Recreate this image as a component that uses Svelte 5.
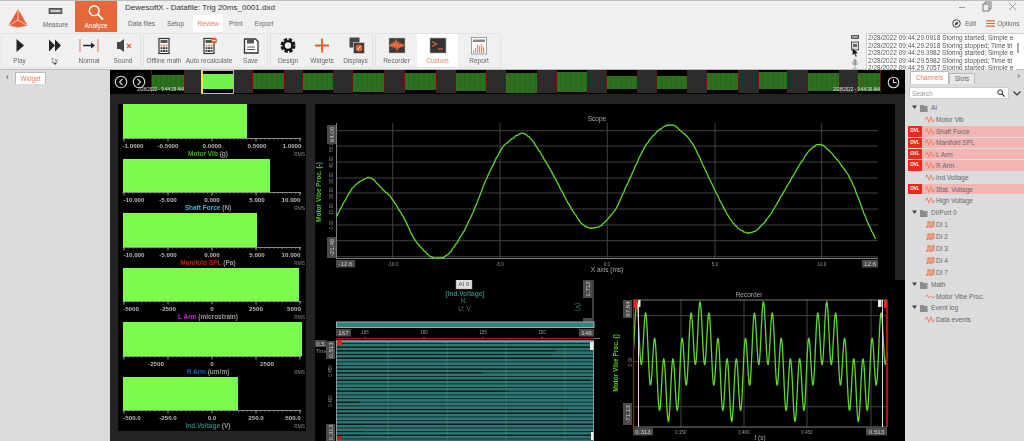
<script>
  const groups = [
    [['Play','play',35],['1x','ff',35],['Normal','normal',34],['Sound','sound',34]],
    [['Offline math','calc',40],['Auto recalculate','recalc',50],['Save','save',33]],
    [['Design','gear',34],['Widgets','plus',34],['Displays','displays',33]],
    [['Recorder','recorder',41],['Custom','custom',41],['Report','report',42]]
  ];
  const tabs = ['Data files','Setup','Review','Print','Export'];
  const log = [
    '2/28/2022 09:44:29.0918 Storing started; Simple e',
    '2/28/2022 09:44:29.2918 Storing stopped; Time tri',
    '2/28/2022 09:44:29.3982 Storing started; Simple e',
    '2/28/2022 09:44:29.5982 Storing stopped; Time tri',
    '2/28/2022 09:44:29.7057 Storing started; Simple e'
  ];
  const G = (w, t, h, stamp = '') => ({ kind: 'g', w, t, h, stamp });
  const D = (w) => ({ kind: 'd', w });
  const segs = [
    G(34,5,15,'2/28/2022 - 9:44:29 AM'),D(16),{kind:'s',w:33},D(18),G(33,3,16),D(17),G(32,3,17),D(18),G(33,3,19),D(19),G(33,3,17),
    D(18),G(32,3,18),D(18),G(33,3,20),D(18),G(32,2,20),D(18),G(32,6,13),D(18),G(32,6,13),D(18),G(33,3,17),D(19),G(30,2,17),D(19),G(33,3,18),D(17),G(24,3,18,'2/28/2022 - 9:44:30 AM')
  ];
  const meters = [
    { name:'Motor Vib', unit:'(g)', color:'#3fae1e', fill:124.5, labels:[['-1.0000',133],['-0.5000',168],['0.0000',212],['0.5000',257],['1.0000',292]] },
    { name:'Shaft Force', unit:'(N)', color:'#3ab6c8', fill:147, labels:[['-10.000',134],['-5.000',168],['0.000',212],['5.000',257],['10.000',291]] },
    { name:'Manifold SPL', unit:'(Pa)', color:'#b8241a', fill:134, labels:[['-10.000',134],['-5.000',168],['0.000',212],['5.000',257],['10.000',291]] },
    { name:'L Arm', unit:'(microstrain)', color:'#c42ad4', fill:176.5, labels:[['-5000',131],['-2500',168],['0',212],['2500',256],['5000',294]] },
    { name:'R Arm', unit:'(um/m)', color:'#2456c8', fill:179, labels:[['-2500',156],['0',212],['2500',267]] },
    { name:'Ind.Voltage', unit:'(V)', color:'#28807a', fill:115.5, labels:[['-500.0',132],['-250.0',168],['0.0',212],['250.0',256],['500.0',293]] }
  ];
  const minor = Array.from({ length: 41 }, (_, i) => 124 + i * 4.4);
  const major = [124, 168, 212, 256, 300];

  const tree = [
    { g:'AI' },{ n:'Motor Vib' },{ n:'Shaft Force', o:1 },{ n:'Manifold SPL', o:1 },{ n:'L Arm', o:1 },{ n:'R Arm', o:1 },
    { n:'Ind.Voltage' },{ n:'Stat. Voltage', o:1 },{ n:'High Voltage' },
    { g:'DI/Port 0' },{ n:'DI 1', d:1 },{ n:'DI 2', d:1 },{ n:'DI 3', d:1 },{ n:'DI 4', d:1 },{ n:'DI 7', d:1 },
    { g:'Math' },{ n:'Motor Vibe Proc.', m:1 },{ g:'Event log' },{ n:'Data events' }
  ];

  const a = [[65,348],[110,268],[140,242],[168,234],[200,265],[230,295],[270,360],[300,420],[345,468],[370,474],[400,462],[440,405],[475,335],[515,235],[555,155],[575,130],[620,100],[650,120],[680,165],[715,225],[760,310],[800,370],[830,384],[860,375],[900,330]]
    .map(([x, y]) => [315 + x / 3, 100 + y / 3]);
  const b = [[30,300],[60,235],[105,140],[150,88],[185,75],[215,95],[250,135],[300,240],[350,340],[380,380],[410,398],[440,390],[480,345],[530,260],[575,185],[600,150],[628,133],[655,150],[690,190],[725,245],[770,360],[800,422]]
    .map(([x, y]) => [610 + x / 3, 100 + y / 3]);
  const ctrl = [...a, ...b];
  function smooth(p) {
    const out = [];
    for (let i = 0; i < p.length - 1; i++) {
      const p0 = p[Math.max(0, i - 1)], p1 = p[i], p2 = p[i + 1], p3 = p[Math.min(p.length - 1, i + 2)];
      const n = Math.max(2, Math.round((p2[0] - p1[0]) / 1.5));
      for (let k = 0; k < n; k++) {
        const t = k / n, t2 = t * t, t3 = t2 * t;
        const f = (q) => 0.5 * (2 * p1[q] + (p2[q] - p0[q]) * t + (2 * p0[q] - 5 * p1[q] + 4 * p2[q] - p3[q]) * t2 + (3 * p1[q] - p0[q] - 3 * p2[q] + p3[q]) * t3);
        const x = f(0);
        const noise = 0.35 * Math.sin(x * 2.3) + 0.25 * Math.sin(x * 5.1 + 1);
        out.push(x.toFixed(1) + ',' + (f(1) + noise).toFixed(1));
      }
    }
    return out.join(' ');
  }
  const scopeLine = smooth(ctrl);

  const recPts = [];
  for (let zx = 101; zx <= 860; zx += 1.5) {
    const y = 230 - 90 * Math.cos(2 * Math.PI * (zx - 300) / 190) - 90 * Math.cos(2 * Math.PI * (zx - 300) / 27.14);
    recPts.push((600 + zx / 3).toFixed(1) + ',' + (285 + y / 3).toFixed(1));
  }
  const recLine = recPts.join(' ');

  const blackEnds = { 2: 556, 3: 552, 6: 340, 8: 481, 10: 590, 13: 508, 16: 360, 18: 568, 24: 363, 37: 412, 38: 458 };
  const rows = Array.from({ length: 27 }, (_, i) => ({ y: 343.5 + i * 3.67, end: blackEnds[i] ?? (i % 3 === 1 ? 594 : 336) }));
</script>

{#snippet icon(n)}
  <svg class="ti" viewBox="0 0 22 18" aria-hidden="true">
    {#if n === 'play'}
      <path d="M7.5 2v13l7.5-6.500z" fill="#222"/>
    {:else if n === 'ff'}
      <path d="M5 2.500v12l6-6zM11 2.500v12l6-6z" fill="#222"/>
    {:else if n === 'normal'}
      <path d="M2 2v13M20 2v13" stroke="#e58a78" stroke-width="1.200"/><path d="M5 8.500h9" stroke="#222" stroke-width="1.500"/><path d="M13 5.500l4 3-4 3z" fill="#222"/>
    {:else if n === 'sound'}
      <path d="M5 5h3l4-3v13l-4-3H5z" fill="#444"/><path d="M15 7l4 4M19 7l-4 4" stroke="#e0603a" stroke-width="1.100"/>
    {:else if n === 'calc' || n === 'recalc'}
      <rect x="6" y="1.500" width="10" height="15" fill="#fff" stroke="#333" stroke-width="1.200"/>
      <rect x="7.500" y="3" width="7" height="3" fill="#555"/>
      {#each [7.5, 10, 12.5] as x}{#each [7.5, 10.2, 13] as y}<rect {x} {y} width="2" height="2" fill={y === 7.5 ? '#e58a78' : '#444'}/>{/each}{/each}
      {#if n === 'recalc'}<circle cx="16" cy="3.500" r="3" fill="#e8603a"/><path d="M14.500 3.500h3" stroke="#fff"/>{/if}
    {:else if n === 'save'}
      <path d="M4.500 2h11l2.500 2.500V16h-13.500z" fill="#fff" stroke="#333" stroke-width="1.300"/><rect x="7" y="2.500" width="7" height="4" fill="#555"/><path d="M7 10h8M7 12.500h8" stroke="#555"/>
    {:else if n === 'gear'}
      <circle cx="11" cy="8.500" r="6.300" fill="none" stroke="#111" stroke-width="2.400" stroke-dasharray="3.300 1.650"/>
      <circle cx="11" cy="8.500" r="4.400" fill="none" stroke="#111" stroke-width="2.400"/>
    {:else if n === 'plus'}
      <path d="M11 1.500v14M4 8.500h14" stroke="#e85a24" stroke-width="1.800"/>
    {:else if n === 'displays'}
      <rect x="4.500" y="0.500" width="10" height="10" fill="#444"/><rect x="8.500" y="5.500" width="11" height="11" fill="#3c3c3c" stroke="#ddd" stroke-width="0.600"/><circle cx="14" cy="11" r="3.400" fill="#e8603a"/><path d="M12.500 12.500l3-3" stroke="#fff"/>
    {:else if n === 'recorder'}
      <rect x="3" y="1" width="16" height="15" fill="#3a3a3a" stroke="#bbb" stroke-width="0.500"/><path d="M3.500 8.500h1.500l1-2 1 3 1-5 1 7 1-9 1 11 1-9 1 7 1-5 1 3 1-2h2" stroke="#ea6a3a" stroke-width="1.200" fill="none"/><rect x="4" y="7" width="14" height="3" fill="#ea6a3a" opacity=".7"/>
    {:else if n === 'custom'}
      <rect x="3" y="1" width="16" height="15" fill="#333" stroke="#aaa" stroke-width="0.600"/><path d="M5 4.500l4.500 2.500L5 9.500" stroke="#e8603a" stroke-width="1.200" fill="none"/><path d="M11 12h5" stroke="#e8603a" stroke-width="1.200"/>
    {:else if n === 'report'}
      <rect x="3.500" y="0.500" width="15" height="16.500" fill="#fff" stroke="#888" stroke-width="0.800"/><rect x="5" y="2.500" width="12" height="2.500" fill="#888"/>
      {#each [[5,13],[7,11],[9,8],[11,9],[13,7],[15,10]] as [x, y]}<rect {x} {y} width="1.200" height={16 - y} fill="#ea8a68"/>{/each}
    {/if}
  </svg>
{/snippet}

<div class="app">
  <header class="ribbon">
    <div class="ribbon-top">
      <div class="logo">
        <svg viewBox="0 0 22 20" width="22" height="20" aria-hidden="true">
          <path d="M11 1l9.500 16.500-9.500 2-9.500-2z" fill="#e2603a"/>
          <path d="M11 1v11M11 12l9 5.500M11 12l-9 5.500" stroke="#f6d5c8" stroke-width="0.900" fill="none"/>
        </svg>
      </div>
      <div class="mode">
        <svg viewBox="0 0 16 7" width="15" height="6" aria-hidden="true"><rect width="16" height="7" fill="#555"/><rect x="2" y="2" width="12" height="3" fill="#ccc"/></svg>
        <span>Measure</span>
      </div>
      <div class="mode active">
        <svg viewBox="0 0 18 18" width="16" height="17" aria-hidden="true"><circle cx="7" cy="7" r="5.500" fill="none" stroke="#fff" stroke-width="1.600"/><path d="M11 11l6 6" stroke="#fff" stroke-width="2"/></svg>
        <span>Analyze</span>
      </div>
      <div class="title-col">
        <div class="title">DewesoftX - Datafile: Trig 20ms_0001.dxd</div>
        <nav class="tabs">
          {#each tabs as t}<span class="tab" class:on={t === 'Review'}>{t}</span>{/each}
        </nav>
      </div>
      <div class="win-col">
        <div class="win">
          <svg viewBox="0 0 60 12" width="60" height="12" aria-hidden="true">
            <path d="M0 6.500h6" stroke="#999"/>
            <rect x="24" y="3" width="6" height="7" fill="none" stroke="#777"/><path d="M26 3V1h6v7h-2" fill="none" stroke="#777"/>
            <path d="M50 2l7 7M57 2l-7 7" stroke="#999"/>
          </svg>
        </div>
        <div class="edit">
          <svg viewBox="0 0 10 10" width="9" height="9" aria-hidden="true"><circle cx="5" cy="5" r="4.200" fill="none" stroke="#333"/><path d="M3 7l1-3 3-1-1 3z" fill="#333"/></svg>
          <span>Edit</span>
          <svg class="burger" viewBox="0 0 10 8" width="9" height="7" aria-hidden="true"><path d="M0 1h10M0 4h10M0 7h10" stroke="#e2603a" stroke-width="1.200"/></svg>
          <span>Options</span>
        </div>
      </div>
    </div>
    <div class="tools">
      {#each groups as g}
        <div class="group">
          {#each g as [label, ic, w]}
            <div class="tool" class:sel={label === 'Custom'} style="width:{w}px">
              {@render icon(ic)}
              <span>{label}</span>
              {#if label === '1x'}<i class="caret"></i>{/if}
            </div>
          {/each}
        </div>
      {/each}
      <div class="spacer"></div>
      <div class="logwrap">
        <div class="devs">
          <svg viewBox="0 0 10 36" width="10" height="36" aria-hidden="true">
            <rect x="1" y="1" width="8" height="4" fill="#555"/><rect x="2" y="2.200" width="6" height="1.500" fill="#bbb"/>
            <rect x="1.500" y="8" width="7" height="8" fill="#ddd" stroke="#555"/><rect x="3" y="10" width="4" height="3" fill="#666"/>
            <rect x="3.500" y="25" width="3" height="6" rx="1.500" fill="#999"/><path d="M2 28a3 3 0 0 0 6 0M5 31v3M3 34.500h4" stroke="#999" fill="none" stroke-width=".7"/>
          </svg>
          <svg class="cursor" viewBox="0 0 8 12" width="7" height="11" aria-hidden="true"><path d="M0.500 0.500v9l2.200-2 1.500 3.500 1.500-.6-1.500-3.400h3z" fill="#111" stroke="#fff" stroke-width=".4"/></svg>
        </div>
        <div class="log">
          {#each log as l}<div>{l}</div>{/each}
        </div>
        <div class="log-scroll"><i></i></div>
      </div>
    </div>
  </header>

  <main class="work">
    <aside class="left">
      <span class="chev">‹</span>
      <span class="wtab">Widget</span>
    </aside>

    <section class="center">
      <div class="timeline">
        <div class="nav">
          <svg viewBox="0 0 32 14" width="32" height="14" aria-hidden="true">
            <circle cx="7" cy="7" r="5.700" fill="none" stroke="#ddd" stroke-width="1.100"/><path d="M8.500 4l-3 3 3 3" fill="none" stroke="#ddd" stroke-width="1.100"/>
            <circle cx="25" cy="7" r="5.700" fill="none" stroke="#ddd" stroke-width="1.100"/><path d="M23.500 4l3 3-3 3" fill="none" stroke="#ddd" stroke-width="1.100"/>
          </svg>
        </div>
        {#each segs as s}
          {#if s.kind === 'd'}
            <div class="gap" style="width:{s.w}px"></div>
          {:else if s.kind === 's'}
            <div class="selected" style="width:{s.w}px"><i></i></div>
          {:else}
            <div class="green" style="width:{s.w}px">
              <i style="margin-top:{s.t}px;height:{s.h}px"></i>
              {#if s.stamp}<b>{s.stamp}</b>{/if}
            </div>
          {/if}
        {/each}
        <div class="clock">
          <svg viewBox="0 0 14 14" width="13" height="13" aria-hidden="true"><circle cx="7" cy="7" r="5.700" fill="none" stroke="#ddd" stroke-width="1.200"/><path d="M7 3.500V7h3.500" fill="none" stroke="#ddd" stroke-width="1.100"/></svg>
        </div>
      </div>
      <div class="strip"></div>
      <div class="body">
        <div class="meters">
          {#each meters as m}
            <div class="meter">
              <div class="track"><div class="fill" style="width:{m.fill}px"></div></div>
              <svg class="axis" viewBox="118 0 188 12" width="188" height="12" aria-hidden="true">
                <path d="M122.500 .5H301" stroke="#888"/>
                {#each minor as x}<path d="M{x} .5v1.200" stroke="#aaa" stroke-width=".6"/>{/each}
                {#each major as x}<path d="M{x} .5v3" stroke="#bbb" stroke-width=".8"/>{/each}
                {#each m.labels as [t, x]}<text {x} y="9.500" text-anchor="middle">{t}</text>{/each}
              </svg>
              <div class="mtitle"><b style="color:{m.color}">{m.name}</b> {m.unit}<em>RMS</em></div>
            </div>
          {/each}
        </div>

        <div class="plots">
          <div class="scope-row">
            <svg class="scope" viewBox="315 104 580 176" width="580" height="176">
              <text class="ttl" x="597" y="121" text-anchor="middle">Scope</text>
              {#each [130.7,146,162,178,193,209,225,240.7,256.7] as y}<line x1="336" x2="878" y1={y} y2={y} class="grid"/>{/each}
              {#each [392.7,500,607.3,715,821.7] as x}<line x1={x} x2={x} y1="123" y2="258" class="grid"/>{/each}
              <path d="M336.500 123V258.500H878" class="ax"/>
              <polyline points={scopeLine} class="trace"/>
              {#each [[146,'50.00'],[162,'40.00'],[178,'30.00'],[193,'20.00'],[209,'10.00'],[225,'0.00']] as [y, t]}
                <text class="tick" transform="translate(333 {y}) rotate(-90)" text-anchor="middle">{t}</text>
              {/each}
              <rect x="327" y="125" width="9" height="19" class="chip"/>
              <text class="chipt" transform="translate(334 134.500) rotate(-90)" text-anchor="middle">64.00</text>
              <rect x="327" y="237" width="9" height="21" class="chip"/>
              <text class="chipt" transform="translate(334 247.500) rotate(-90)" text-anchor="middle">-21.46</text>
              <rect x="336" y="260" width="19" height="7.500" class="chip"/>
              <text class="chipt" x="345.500" y="266" text-anchor="middle">-12.6</text>
              <rect x="862" y="260" width="16" height="7.500" class="chip"/>
              <text class="chipt" x="870" y="266" text-anchor="middle">12.6</text>
              {#each [[393,'-10.0'],[500,'-5.0'],[607,'0.0'],[715,'5.0'],[822,'10.0']] as [x, t]}
                <text class="tick" {x} y="265.500" text-anchor="middle">{t}</text>
              {/each}
              <text class="axt" x="607" y="272" text-anchor="middle">X axis (ms)</text>
              <text class="ylab" transform="translate(320.500 192) rotate(-90)" text-anchor="middle">Motor Vibe Proc. (-)</text>
            </svg>
            <div class="side"></div>
          </div>
          <div class="lower">
            <svg class="heat" viewBox="315 280 285 161" width="285" height="161">
              <rect x="456" y="277.500" width="16" height="11.500" fill="#ddd" stroke="#999" stroke-width=".5"/>
              <text class="chipd" x="464" y="285.500" text-anchor="middle">AI 6</text>
              <text class="teal b" x="465" y="295.500" text-anchor="middle">[Ind.Voltage]</text>
              <text class="teal" x="464" y="303" text-anchor="middle">N:</text>
              <text class="teal" x="464.500" y="311" text-anchor="middle">U: V</text>
              <text class="teal" transform="translate(576 307) rotate(90)" text-anchor="middle">(V)</text>
              <path d="M593 280V323" class="ax"/>
              <rect x="583" y="280" width="9" height="18" class="chip"/>
              <text class="chipt" transform="translate(590 289) rotate(-90)" text-anchor="middle">1.712</text>
              <rect x="583" y="318" width="9" height="4" class="chip"/>
              <rect x="336.500" y="322" width="257.500" height="5.500" fill="#2f8480" stroke="#aaa"/>
              <rect x="336" y="329" width="15" height="7.500" class="chip"/>
              <text class="chipt" x="343.500" y="335" text-anchor="middle">167</text>
              <rect x="579" y="329" width="15" height="7.500" class="chip"/>
              <text class="chipt" x="586.500" y="335" text-anchor="middle">148</text>
              {#each [[365,'165'],[424,'160'],[483,'155'],[542,'150']] as [x, t]}
                <text class="tick" {x} y="333.500" text-anchor="middle">{t}</text>
                <path d="M{x} 337v1" stroke="#aaa"/>
              {/each}
              <path d="M336 338.500H594" stroke="#a81c14" stroke-width="1.200"/>
              <path d="M594 338.500H600" stroke="#777"/>
              <rect x="336" y="340.500" width="258" height="101" fill="#2f7471"/>
              <path d="M336 341H594" stroke="#cfe3e0" stroke-width=".8"/>
              {#each rows as r}
                <line x1="336" x2="594" y1={r.y} y2={r.y} stroke="#0c2e2e" stroke-width="1"/>
                {#if r.end > 336}<line x1="336" x2={r.end} y1={r.y} y2={r.y} stroke="#021010" stroke-width="1"/>{/if}
              {/each}
              {#each [388,447,506,565] as x}<line x1={x} x2={x} y1="341" y2="441" stroke="#5b8f8c" stroke-width=".4"/>{/each}
              <path d="M336.500 340V441M593.500 340V441" stroke="#aaa" stroke-width=".8"/>
              <rect x="337" y="340" width="5" height="5" fill="#d32a1e"/>
              <rect x="337" y="436" width="5" height="4" fill="#b8201a"/>
              <rect x="590" y="342" width="3.500" height="8" fill="#eee"/>
              <rect x="591" y="432" width="2.500" height="8" fill="#eee"/>
              <rect x="315" y="340" width="11" height="7" class="chip"/>
              <text class="chipt" x="320.500" y="346" text-anchor="middle">0.5</text>
              <text class="tick big" x="322" y="352.500" text-anchor="middle">Time</text>
              <rect x="326" y="341" width="9" height="18" class="chip"/>
              <text class="chipt" transform="translate(333 350) rotate(-90)" text-anchor="middle">0.513</text>
              <rect x="326" y="424" width="9" height="17" class="chip"/>
              <text class="chipt" transform="translate(333 432.500) rotate(-90)" text-anchor="middle">0.313</text>
              {#each [[371,'0.450'],[401,'0.400']] as [y, t]}
                <text class="tick" transform="translate(332 {y}) rotate(-90)" text-anchor="middle">{t}</text>
              {/each}
            </svg>
            <svg class="rec" viewBox="600 280 305 161" width="305" height="161">
              <text class="ttl" x="749" y="297" text-anchor="middle">Recorder</text>
              {#each [315.7,361.7,406.7] as y}<line x1="633" x2="887" y1={y} y2={y} class="grid"/>{/each}
              {#each [681,744,807,871] as x}<line x1={x} x2={x} y1="300" y2="427" class="grid"/>{/each}
              <path d="M633 300H887V427H633" class="ax"/>
              <polyline points={recLine} class="trace"/>
              <path d="M633.500 300V427M886.500 300V427" stroke="#a81c14" stroke-width="1.200"/>
              <path d="M638.500 300V427M882.500 300V427" stroke="#ddd" stroke-width="1"/>
              <rect x="634" y="300" width="3" height="8" fill="#e02a20"/>
              <rect x="638" y="300" width="2.500" height="7" fill="#eee"/>
              <rect x="878" y="300" width="3.500" height="7" fill="#eee"/>
              <rect x="884" y="300" width="3" height="8" fill="#e02a20"/>
              <rect x="623" y="300" width="9" height="18" class="chip"/>
              <text class="chipt" transform="translate(630 309) rotate(-90)" text-anchor="middle">67.84</text>
              <rect x="623" y="403" width="9" height="22" class="chip"/>
              <text class="chipt" transform="translate(630 414) rotate(-90)" text-anchor="middle">-71.13</text>
              <text class="tick" transform="translate(632 362) rotate(-90)" text-anchor="middle">0.00</text>
              <rect x="633" y="428" width="20" height="7.500" class="chip"/>
              <text class="chipt" x="643" y="434" text-anchor="middle">0.313</text>
              <rect x="866" y="428" width="21" height="7.500" class="chip"/>
              <text class="chipt" x="876.500" y="434" text-anchor="middle">0.513</text>
              {#each [[681,'0.350'],[744,'0.400'],[807,'0.450']] as [x, t]}
                <text class="tick" {x} y="433.500" text-anchor="middle">{t}</text>
              {/each}
              <text class="axt" x="760" y="439.500" text-anchor="middle">t (s)</text>
              <text class="ylab" transform="translate(617.500 363) rotate(-90)" text-anchor="middle">Motor Vibe Proc. ()</text>
            </svg>
          </div>
        </div>
      </div>
    </section>

    <aside class="right">
      <div class="rtabs">
        <span class="rt on">Channels</span><span class="rt">Slots</span>
        <span class="rchev">›</span>
      </div>
      <div class="search">
        <div class="sbox">
          <span>Search</span>
          <svg viewBox="0 0 10 10" width="8" height="8" aria-hidden="true"><circle cx="4" cy="4" r="3" fill="none" stroke="#222" stroke-width="1.200"/><path d="M6.200 6.200L9.500 9.500" stroke="#222" stroke-width="1.400"/></svg>
        </div>
        <svg viewBox="0 0 8 5" width="8" height="5" aria-hidden="true"><path d="M.5 .5L4 4 7.500 .5" fill="none" stroke="#333" stroke-width="1.100"/></svg>
      </div>
      <ul class="tree">
        {#each tree as t}
          {#if t.g}
            <li class="grp">
              <svg viewBox="0 0 16 9" width="16" height="9" aria-hidden="true"><path d="M0 2.500h5L2.500 6z" fill="#444"/><path d="M8 2h3l1 1h3.500v6H8z" fill="#8d8d8d"/></svg>
              <span>{t.g}</span>
            </li>
          {:else}
            <li class="ch" class:ovl={t.o}>
              {#if t.o}<b>OVL</b>{/if}
              <svg class="wv" viewBox="0 0 10 7" width="10" height="7" aria-hidden="true">
                {#if t.d}
                  <path d="M1 6h2V1h2v5h2V1h2v5" fill="none" stroke="#e8805a" stroke-width="1.300"/>
                {:else if t.m}
                  <path d="M0 4l2-2 2 3 2-2 2 2 2-2" fill="none" stroke="#e8805a" stroke-width=".9"/>
                {:else}
                  <path d="M0 4L2 .8 4 6.200 6 .8 8 6.200 10 3" fill="none" stroke="#e8805a" stroke-width=".9"/>
                {/if}
              </svg>
              <span>{t.n}</span>
            </li>
          {/if}
        {/each}
      </ul>
    </aside>
  </main>
</div>

<style>
  :global(body) { margin: 0; background: #000; }
  .app { width: 1024px; height: 441px; overflow: hidden; display: flex; flex-direction: column; font-family: "Liberation Sans", Arial, sans-serif; font-size: 6.500px; color: #666; filter: blur(0.3px); }

  .ribbon { height: 70px; flex: none; background: #f0f0f0; border-top: 1px solid #bdbdbd; box-sizing: border-box; border-bottom: 1px solid #bbb; }
  .ribbon-top { height: 31px; display: flex; }
  .logo { width: 36px; display: flex; align-items: center; justify-content: center; padding-top: 3px; box-sizing: border-box; }
  .mode { width: 39px; display: flex; flex-direction: column; align-items: center; justify-content: flex-end; gap: 7px; padding-bottom: 4px; box-sizing: border-box; font-size: 6.500px; }
  .mode.active { width: 42px; background: #e5693b; color: #fff; gap: 1px; padding-bottom: 3px; }
  .title-col { width: 400px; padding-left: 8px; display: flex; flex-direction: column; }
  .title { font-size: 8px; color: #333; height: 14px; line-height: 13px; }
  .tabs { display: flex; height: 17px; }
  .tab { display: flex; align-items: center; justify-content: center; padding: 0 3px; font-size: 6.500px; margin-right: 6px; }
  .tab.on { background: #fff; color: #e8805a; padding: 0 4px; margin: 0 3px 0 0; width: 22px; }
  .win-col { margin-left: auto; width: 78px; display: flex; flex-direction: column; }
  .win { height: 12px; padding-left: 13px; }
  .edit { display: flex; align-items: center; gap: 4px; height: 16px; font-size: 6.500px; margin-top: 2px; margin-left: 6px; }
  .burger { margin-left: 6px; margin-right: -2px; }

  .tools { display: flex; height: 37px; gap: 2px; padding-left: 1px; position: relative; }
  .group { display: flex; height: 35px; margin-top: 1px; border: 1px solid #e3e3e3; box-sizing: border-box; }
  .tool { position: relative; display: flex; flex-direction: column; align-items: center; padding-top: 3px; box-sizing: border-box; }
  .tool.sel { background: #fff; color: #e8805a; }
  .tool span { white-space: nowrap; margin-top: 2px; }
  .ti { width: 22px; height: 18px; display: block; }
  .caret { position: absolute; left: 50%; bottom: 0; margin-left: -2px; border: 2px solid transparent; border-top-color: #444; }
  .spacer { flex: 1; }
  .logwrap { display: flex; }
  .devs { position: relative; width: 10px; margin-right: 6px; padding-top: 2px; }
  .cursor { position: absolute; left: 2px; top: 15px; }
  .log { width: 150px; height: 37px; background: #fff; border: 1px solid #ccc; border-width: 1px 0 0 1px; box-sizing: border-box; overflow: hidden; font-size: 6.500px; line-height: 7.600px; white-space: nowrap; padding-left: 1px; margin-top: 1px; color: #555; }
  .log-scroll { width: 8px; background: #fff; position: relative; margin-top: 1px; height: 36px; border-top: 1px solid #ccc; box-sizing: border-box; }
  .log-scroll i { position: absolute; left: 1px; top: 9px; width: 2px; height: 10px; background: #aaa; }

  .work { flex: 1; display: flex; min-height: 0; }
  .left { width: 110px; flex: none; background: #dcdbdd; display: flex; align-items: flex-start; padding-top: 2px; box-sizing: border-box; }
  .chev { width: 15px; text-align: center; font-size: 9px; line-height: 10px; color: #444; }
  .wtab { width: 31px; height: 12px; background: #fff; color: #e8805a; text-align: center; line-height: 12px; border: 1px solid #bbb; border-bottom: 0; box-sizing: border-box; }

  .center { width: 795px; flex: none; display: flex; flex-direction: column; background: #232323; }
  .timeline { height: 24px; display: flex; background: #000; flex: none; }
  .nav { width: 41px; flex: none; display: flex; align-items: center; padding-left: 4px; box-sizing: border-box; }
  .gap { background: #2c2c2c; height: 23px; flex: none; }
  .green { position: relative; flex: none; border-left: 1px solid #5a1a10; border-right: 1px solid #5a1a10; box-sizing: border-box; height: 23px; }
  .green i { display: block; background: repeating-linear-gradient(90deg, #2f6f20 0 3px, #2a6a1d 3px 5px); }
  .green b { position: absolute; right: 0; bottom: 0; font-size: 4.500px; font-weight: 400; color: #e5e5e5; white-space: nowrap; line-height: 6px; }
  .selected { flex: none; box-sizing: border-box; border: 1px solid #bbb; border-left: 2px solid #f2e33a; height: 24px; padding-top: 3px; }
  .selected i { display: block; height: 15px; background: #72f24c; }
  .clock { flex: 1; display: flex; align-items: center; justify-content: center; }
  .strip { height: 10px; flex: none; }

  .body { flex: 1; display: flex; padding-left: 8px; min-height: 0; }
  .meters { width: 188px; height: 327px; background: #000; margin-right: 9px; flex: none; }
  .meter { height: 54.500px; }
  .track { margin-left: 4.500px; height: 33.500px; }
  .fill { height: 100%; background: #7bfb4c; }
  .axis { display: block; }
  .axis text { font-size: 6.200px; font-weight: 700; fill: #bbb; }
  .mtitle { position: relative; height: 9px; line-height: 8px; text-align: center; color: #999; font-size: 6.500px; font-weight: 700; padding-right: 8px; }
  .mtitle em { position: absolute; right: 1px; top: 1px; font-style: normal; font-size: 4.800px; font-weight: 400; color: #888; }

  .plots { width: 590px; flex: none; background: #000; display: flex; flex-direction: column; }
  .scope-row { height: 176px; display: flex; flex: none; }
  .side { width: 10px; background: #232323; }
  .lower { display: flex; height: 161px; }
  svg text { font-family: "Liberation Sans", Arial, sans-serif; }
  .scope, .heat, .rec { display: block; flex: none; }
  .grid { stroke: #474747; stroke-width: 0.900; }
  .ax { stroke: #808080; fill: none; stroke-width: 1; }
  .trace { fill: none; stroke: #62d62e; stroke-width: 1.300; stroke-linejoin: round; }
  .ttl { font-size: 6.500px; fill: #aaa; }
  .tick { font-size: 4.500px; fill: #999; }
  .tick.big { font-size: 5.500px; }
  .axt { font-size: 6.500px; fill: #aaa; }
  .ylab { font-size: 6.500px; font-weight: 700; fill: #58c82a; }
  .chip { fill: #4a4a4a; }
  .chipt { font-size: 6.200px; fill: #ccc; }
  .chipd { font-size: 6.200px; fill: #555; }
  .teal { font-size: 6.500px; fill: #2a8078; }
  .teal.b { font-weight: 700; }

  .right { width: 119px; flex: none; background: #dcdbdd; display: flex; flex-direction: column; }
  .rtabs { display: flex; align-items: flex-end; height: 14px; padding-left: 5px; position: relative; }
  .rt { height: 10px; width: 24px; line-height: 10px; text-align: center; background: #e8e8e8; border: 1px solid #bbb; border-bottom: 0; }
  .rt.on { width: 37px; height: 12px; line-height: 12px; background: #fff; color: #e8805a; }
  .rchev { position: absolute; right: 4px; top: 1px; font-size: 9px; line-height: 10px; color: #444; }
  .search { display: flex; align-items: center; gap: 4px; padding: 3px 0 0 4px; }
  .sbox { width: 100px; height: 12px; box-sizing: border-box; background: #fff; border: 1px solid #ccc; display: flex; align-items: center; justify-content: space-between; padding: 0 3px 0 2px; color: #999; }
  .tree { list-style: none; margin: 3px 0 0; padding: 0; }
  .tree li { height: 11.900px; display: flex; align-items: center; white-space: nowrap; color: #666; }
  .grp { padding-left: 7px; gap: 3px; }
  .ch { padding-left: 20px; gap: 1px; }
  .ch.ovl { margin-left: 3px; padding-left: 0; height: 10.500px; margin-top: 0.700px; margin-bottom: 0.700px; background: #f3b4b4; }
  .ch b { width: 14px; height: 100%; margin-right: 2px; background: #ea2a1c; color: #fff; font-size: 4.500px; text-align: center; line-height: 10.500px; }
</style>
